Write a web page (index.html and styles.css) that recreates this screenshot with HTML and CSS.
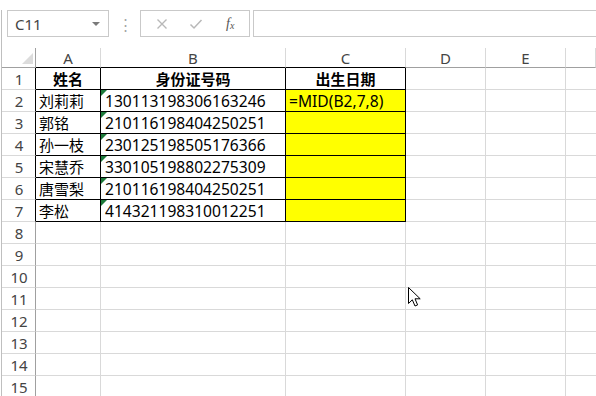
FILE: index.html
```html
<!DOCTYPE html>
<html lang="zh-CN">
<head>
<meta charset="utf-8">
<title>Excel MID</title>
<link rel="stylesheet" href="styles.css">
</head>
<body>
<div class="app">
  <div class="fbar">
    <div class="namebox"><span class="nb-text">C11</span><span class="nb-arrow"></span></div>
    <div class="grip">⋮</div>
    <div class="fbtns">
      <svg class="ic" width="12" height="12" viewBox="0 0 12 12"><path d="M1.5 1.5 L10.5 10.5 M10.5 1.5 L1.5 10.5" stroke="#b8b8b8" stroke-width="1.4" fill="none"/></svg>
      <svg class="ic" width="14" height="12" viewBox="0 0 14 12"><path d="M1.5 6.5 L5 10 L12.5 2" stroke="#b8b8b8" stroke-width="1.5" fill="none"/></svg>
      <span class="fx">f<sub>x</sub></span>
    </div>
    <div class="finput"></div>
  </div>
  <div class="sheet">
    <div class="ch corner"><span class="selall"></span></div>
    <div class="ch tb">A</div>
    <div class="ch tb">B</div>
    <div class="ch tb">C</div>
    <div class="ch">D</div>
    <div class="ch">E</div>
    <div class="ch last"></div>

    <div class="rh rb">1</div>
    <div class="c b hd">姓名</div>
    <div class="c b hd">身份证号码</div>
    <div class="c b hd bc">出生日期</div>
    <div class="c"></div><div class="c"></div><div class="c last"></div>

    <div class="rh rb">2</div>
    <div class="c b">刘莉莉</div>
    <div class="c b num"><span class="tri"></span>130113198306163246</div>
    <div class="c b bc y num">=MID(B2,7,8)</div>
    <div class="c"></div><div class="c"></div><div class="c last"></div>

    <div class="rh rb">3</div>
    <div class="c b">郭铭</div>
    <div class="c b num"><span class="tri"></span>210116198404250251</div>
    <div class="c b bc y"></div>
    <div class="c"></div><div class="c"></div><div class="c last"></div>

    <div class="rh rb">4</div>
    <div class="c b">孙一枝</div>
    <div class="c b num"><span class="tri"></span>230125198505176366</div>
    <div class="c b bc y"></div>
    <div class="c"></div><div class="c"></div><div class="c last"></div>

    <div class="rh rb">5</div>
    <div class="c b">宋慧乔</div>
    <div class="c b num"><span class="tri"></span>330105198802275309</div>
    <div class="c b bc y"></div>
    <div class="c"></div><div class="c"></div><div class="c last"></div>

    <div class="rh rb">6</div>
    <div class="c b">唐雪梨</div>
    <div class="c b num"><span class="tri"></span>210116198404250251</div>
    <div class="c b bc y"></div>
    <div class="c"></div><div class="c"></div><div class="c last"></div>

    <div class="rh rb">7</div>
    <div class="c b">李松</div>
    <div class="c b num"><span class="tri"></span>414321198310012251</div>
    <div class="c b bc y"></div>
    <div class="c"></div><div class="c"></div><div class="c last"></div>

    <div class="rh">8</div><div class="c"></div><div class="c"></div><div class="c"></div><div class="c"></div><div class="c"></div><div class="c last"></div>
    <div class="rh">9</div><div class="c"></div><div class="c"></div><div class="c"></div><div class="c"></div><div class="c"></div><div class="c last"></div>
    <div class="rh">10</div><div class="c"></div><div class="c"></div><div class="c"></div><div class="c"></div><div class="c"></div><div class="c last"></div>
    <div class="rh">11</div><div class="c"></div><div class="c"></div><div class="c"></div><div class="c"></div><div class="c"></div><div class="c last"></div>
    <div class="rh">12</div><div class="c"></div><div class="c"></div><div class="c"></div><div class="c"></div><div class="c"></div><div class="c last"></div>
    <div class="rh">13</div><div class="c"></div><div class="c"></div><div class="c"></div><div class="c"></div><div class="c"></div><div class="c last"></div>
    <div class="rh">14</div><div class="c"></div><div class="c"></div><div class="c"></div><div class="c"></div><div class="c"></div><div class="c last"></div>
    <div class="rh">15</div><div class="c"></div><div class="c"></div><div class="c"></div><div class="c"></div><div class="c"></div><div class="c last"></div>
  </div>
  <svg class="cursor" width="14" height="21" viewBox="0 0 14 21"><path d="M0.5 0.5 V16.5 L4.3 12.8 L7 19 L9.6 17.9 L7 11.8 H12.2 Z" fill="#fff" stroke="#000" stroke-width="1" stroke-linejoin="miter"/></svg>
</div>
</body>
</html>
```
FILE: styles.css
```css
* { box-sizing: border-box; }
html, body { margin: 0; padding: 0; background: #fff; }
body {
  width: 596px;
  height: 396px;
  overflow: hidden;
  padding-left: 1px;
  font-family: "Noto Sans", "Noto Sans CJK SC", sans-serif;
  color: #000;
}
.app {
  position: relative;
  height: 396px;
  border-left: 1px solid #bfbfbf;
}
.fbar {
  display: flex;
  height: 27px;
  margin-top: 10px;
  margin-bottom: 11px;
}
.namebox {
  margin-left: 5px;
  width: 102px;
  border: 1px solid #c9c9c9;
  display: flex;
  align-items: center;
  justify-content: space-between;
  padding: 0 8px 0 7px;
}
.nb-text { font-size: 15px; color: #444; }
.nb-arrow {
  width: 0; height: 0;
  border-left: 4px solid transparent;
  border-right: 4px solid transparent;
  border-top: 4px solid #7a7a7a;
}
.grip {
  width: 31px;
  display: flex;
  align-items: center;
  justify-content: center;
  color: #a6a6a6;
  font-size: 15px;
  padding-left: 1px;
}
.fbtns {
  width: 110px;
  border: 1px solid #c9c9c9;
  display: flex;
  align-items: center;
  padding-left: 15px;
  gap: 21px;
}
.fx {
  font-family: "Liberation Serif", serif;
  font-style: italic;
  font-size: 14px;
  color: #555;
  margin-left: 2px;
}
.fx sub { font-size: 10px; vertical-align: -1px; }
.finput {
  flex: 1;
  margin-left: 3px;
  border: 1px solid #c9c9c9;
  border-right: none;
}
.sheet {
  display: grid;
  grid-template-columns: 34px 65px 185px 120px 80px 80px 1fr;
  grid-template-rows: 20px;
  grid-auto-rows: 22px;
}
.ch {
  border-right: 1px solid #d9d9d9;
  border-bottom: 1px solid #a0a0a0;
  font-size: 15px;
  color: #444;
  display: flex;
  align-items: center;
  justify-content: center;
  padding-top: 1px;
}
.ch.tb { border-bottom-color: #000; }
.corner {
  position: relative;
  border-right-color: #a0a0a0;
}
.selall {
  position: absolute;
  right: 2px;
  bottom: 3px;
  width: 0; height: 0;
  border-left: 11px solid transparent;
  border-bottom: 11px solid #dcdcdc;
}
.rh {
  border-right: 1px solid #a0a0a0;
  border-bottom: 1px solid #d9d9d9;
  font-size: 15px;
  color: #444;
  display: flex;
  align-items: center;
  justify-content: center;
  padding-left: 1px;
}
.rh.rb { border-right-color: #000; }
.c {
  position: relative;
  border-right: 1px solid #d9d9d9;
  border-bottom: 1px solid #d9d9d9;
  font-size: 15px;
  display: flex;
  align-items: center;
  padding-left: 3px;
  white-space: nowrap;
}
.c.last { border-right: none; }
.c.b { border-bottom-color: #000; }
.c.b:not(.bc) { border-right-color: #000; }
.c.bc { border-right-color: #000; }
.c.hd { font-weight: 700; justify-content: center; padding-left: 0; }
.c.num { font-size: 15.6px; padding-left: 4px; }
.c.y { background: #ffff00; padding-left: 3px; }
.tri {
  position: absolute;
  top: 0;
  left: 0;
  width: 0; height: 0;
  border-top: 6px solid #1d7a3a;
  border-right: 6px solid transparent;
}
.cursor {
  position: absolute;
  left: 406px;
  top: 277px;
}
```
